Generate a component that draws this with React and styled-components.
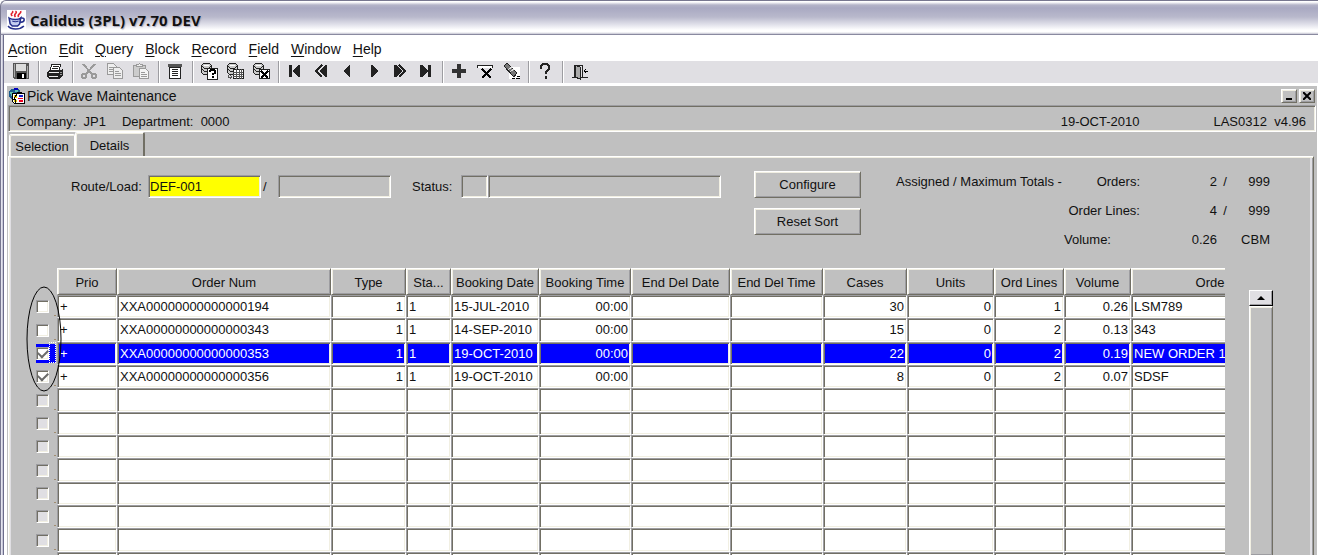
import React from "react";
import styled, { createGlobalStyle, css } from "styled-components";

const c = {
  face: "#c0c0c0",
  tool: "#e0dfe3",
  light: "#f1efe2",
  mid: "#9d9da1",
  dark: "#716f64",
  ink: "#111",
};

const sunken = css`
  border: 1px solid;
  border-color: ${c.mid} #fff #fff ${c.mid};
  box-shadow: inset 1px 1px ${c.dark}, inset -1px -1px ${c.light};
`;
const raised = css`
  border: 1px solid;
  border-color: #fff ${c.dark} ${c.dark} #fff;
  box-shadow: inset 1px 1px ${c.light}, inset -1px -1px ${c.mid};
`;

const GlobalStyle = createGlobalStyle`
  * { box-sizing: border-box; }
  body { margin: 0; background: #fff; }
  body, button, input, table {
    font-family: "Liberation Sans", Arial, sans-serif;
    font-size: 13px;
    line-height: 16px;
    color: ${c.ink};
  }
`;

const Shell = styled.div`
  display: flex;
  flex-direction: column;
  height: 100vh;
  padding-bottom: 2px;
  overflow: hidden;
`;
const TitleBar = styled.header`
  display: flex;
  align-items: center;
  gap: 4px;
  height: 35px;
  flex: none;
  padding: 4px 6px 0;
  border-top: 1px solid #77778f;
  border-left: 1px solid #77778f;
  border-bottom: 1px solid #8a8aa0;
  border-top-left-radius: 6px;
  background: linear-gradient(#fff 0, #fff 1px, #b4b4c8 4px, #a9a9c2 7px, #b9b9cc 16px, #dedee8 23px, #fff 29px, #fff 31px, #c4c4d2 33px);
`;
const AppTitle = styled.h1`
  margin: 0;
  font: bold 15px/20px "Open Sans", "Noto Sans", sans-serif;
  color: ${c.ink};
  text-shadow: 1px 1px 1px #aaaabc;
`;
const Frame = styled.div`
  flex: 1;
  min-height: 0;
  display: flex;
  flex-direction: column;
  border-left: 1px solid #77778f;
  box-shadow: inset 1px 0 #e4e4ee, inset 2px 0 #c8c8d8, inset 3px 0 #6c6c8a;
  padding-left: 3px;
`;
const MenuBar = styled.nav`
  display: flex;
  align-items: center;
  gap: 12px;
  height: 26px;
  flex: none;
  padding: 2px 4px 0;
`;
const MenuButton = styled.button`
  border: 0;
  padding: 0;
  background: none;
  font-size: 14px;
  span { text-decoration: underline; text-underline-offset: 2px; }
`;
const ToolBar = styled.div`
  display: flex;
  height: 22px;
  flex: none;
  padding-left: 5px;
  background: ${c.tool};
`;
const ToolButton = styled.button`
  display: flex;
  justify-content: center;
  width: 26px;
  padding: 2px 0;
  border: 0;
  background: none;
  svg { display: block; }
`;
const Divider = styled.i`
  width: 8px;
  background: linear-gradient(90deg, transparent 3px, ${c.mid} 3px, ${c.mid} 4px, #fff 4px, #fff 5px, transparent 5px);
`;
const Workspace = styled.main`
  flex: 1;
  min-height: 0;
  display: flex;
  flex-direction: column;
  margin: 3px 1px 0 3px;
  background: ${c.face};
`;
const FormTitle = styled.div`
  display: flex;
  align-items: center;
  gap: 2px;
  height: 19px;
  flex: none;
  padding: 0 2px;
`;
const FormName = styled.h2`
  flex: 1;
  margin: 0;
  font-size: 14px;
  font-weight: normal;
`;
const WindowButton = styled.button`
  ${raised}
  display: grid;
  place-items: center;
  width: 16px;
  height: 14px;
  padding: 0;
  background: ${c.face};
  svg { display: block; }
`;
const InfoBar = styled.div`
  ${sunken}
  display: flex;
  height: 27px;
  flex: none;
  margin: 0 1px;
  padding: 8px 9px 0 8px;
  gap: 16px;
`;
const Fact = styled.span`
  white-space: pre;
`;
const DateFact = styled(Fact)`
  margin: 0 58px 0 auto;
`;
const TabStrip = styled.div`
  display: flex;
  align-items: flex-end;
  height: 24px;
  flex: none;
  padding-left: 2px;
`;
const Tab = styled.button`
  width: ${(p) => (p.$active ? 70 : 66)}px;
  height: ${(p) => (p.$active ? 24 : 22)}px;
  padding: 2px 0 0;
  border: 1px solid #fff;
  border-bottom: 0;
  border-radius: 2px 2px 0 0;
  background: ${c.face};
  box-shadow: inset 1px 1px ${c.light};
  ${(p) => p.$active && css`border-right: 2px solid ${c.dark};`}
`;
const TabPanel = styled.section`
  flex: 1;
  min-height: 0;
  display: flex;
  flex-direction: column;
  margin: 0 3px 0 1px;
  border: 1px solid #fff;
  border-right: 1px solid ${c.dark};
  border-bottom: 0;
  box-shadow: inset 1px 1px ${c.light}, inset 2px 0 ${c.tool}, inset -1px 0 ${c.mid}, inset -3px 0 ${c.tool};
  padding: 0 2px;
`;
const FormArea = styled.form`
  display: flex;
  align-items: flex-start;
  height: 111px;
  flex: none;
  padding: 10px 41px 0 60px;
`;
const FieldRow = styled.div`
  display: flex;
  align-items: center;
  padding-top: 8px;
`;
const Label = styled.label`
  width: ${(p) => p.$w}px;
  padding-left: ${(p) => p.$indent || 0}px;
  white-space: nowrap;
`;
const Field = styled.input`
  ${sunken}
  width: ${(p) => p.$w}px;
  height: 23px;
  padding: 0 1px;
  border-radius: 0;
  background: ${(p) => (p.$hot ? "#ff0" : c.face)};
  outline: 0;
`;
const Slash = styled.span`
  width: 17px;
  padding-left: 2px;
`;
const ButtonStack = styled.div`
  display: grid;
  gap: 10px;
  margin-left: 33px;
  padding-top: 4px;
`;
const PushButton = styled.button`
  ${raised}
  width: 107px;
  height: 27px;
  padding: 1px 0 0;
  background: ${c.face};
`;
const Totals = styled.div`
  display: grid;
  grid-template-columns: 168px 76px 77px 16px 37px;
  grid-auto-rows: 29px;
  align-items: center;
  justify-items: end;
  margin-left: auto;
  white-space: nowrap;
`;
const Start = styled.span`
  justify-self: start;
`;
const Caption = styled.span`
  grid-column: 2;
  justify-self: ${(p) => (p.$start ? "start" : "end")};
`;
const Unit = styled.span`
  grid-column: 5;
`;
const Center = styled.span`
  justify-self: center;
`;
const GridArea = styled.div`
  position: relative;
  flex: 1;
  min-height: 0;
  display: flex;
  gap: 24px;
  margin: 0 38px 0 25px;
`;
const Viewport = styled.div`
  flex: 1;
  min-width: 0;
  overflow: hidden;
`;
const Grid = styled.table`
  table-layout: fixed;
  width: 1253px;
  border-collapse: separate;
  border-spacing: 0;
  white-space: nowrap;
`;
const HeadCell = styled.th`
  ${raised}
  height: 27px;
  padding: 2px 0 0;
  font-weight: normal;
  background: ${c.face};
`;
const CornerCell = styled.th`
  padding: 0;
`;
const Row = styled.tr`
  height: 23px;
  &:nth-child(3n + 2) { height: 24px; }
`;
const Cell = styled.td`
  ${sunken}
  padding: 0 2px;
  text-align: ${(p) => (p.$right ? "right" : "left")};
  background: ${(p) => (p.$on ? "#00f" : "#fff")};
  color: ${(p) => (p.$on ? "#fff" : c.ink)};
`;
const TickCell = styled.td`
  padding: 0;
`;
const TickBox = styled.div`
  display: flex;
  align-items: center;
  justify-content: space-between;
  width: 20px;
  height: 19px;
  background: ${(p) => (p.$on ? "#00f" : "transparent")};
  &::after {
    content: "";
    width: ${(p) => (p.$on ? 5 : 2)}px;
    height: ${(p) => (p.$on ? 19 : 1)}px;
    align-self: flex-end;
    border: ${(p) => (p.$on ? "1px dotted #fff" : "0")};
    background: ${(p) => (p.$on ? "transparent" : "#a08c70")};
  }
`;
const Tick = styled.input`
  ${sunken}
  appearance: none;
  display: grid;
  place-items: center;
  width: 13px;
  height: 13px;
  margin: 0;
  background: #fff;
  &:disabled { background: ${c.tool}; }
  &:checked::after {
    content: "";
    width: 8px;
    height: 5px;
    margin-bottom: 2px;
    border: solid #6a6a6a;
    border-width: 0 0 2px 2px;
    transform: rotate(-45deg);
  }
`;
const ScrollBar = styled.div`
  display: flex;
  flex-direction: column;
  width: 24px;
  margin-top: 22px;
`;
const ScrollUp = styled.button`
  display: grid;
  place-items: center;
  height: 16px;
  padding: 0;
  border: 1px solid;
  border-color: #fff #000 #000 #fff;
  box-shadow: inset -1px -1px ${c.mid};
  background: ${c.tool};
`;
const ScrollTrack = styled.div`
  ${raised}
  flex: 1;
  border-bottom: 0;
`;
const Ring = styled.svg`
  position: absolute;
  left: -10px;
  top: 18px;
`;

const K = "#222";
const G = "#9a9a9a";
const art = {
  save: (
    <>
      <path d="M0 0h16v16H1L0 15z" fill="#555" />
      <path d="M3 1h10v7H3z" fill="#ddd" />
      <path d="M4 10h9v6H4z" fill="#000" />
      <path d="M9 11h2v4H9z" fill="#fff" />
      <path d="M1 1h1v13H1zM14 3h1v12h-1z" fill="#aaa" />
    </>
  ),
  print: (
    <>
      <path d="M5 1h9l-2 6H3z" fill="#fff" stroke={K} />
      <path d="M6 3h6M5 5h6" stroke={K} />
      <path d="M2 7h12l2-2v7l-3 4H2l-2-2V9z" fill={K} />
      <path d="M2 9h10M2 13h9" stroke="#eee" />
      <path d="M13 9h2M13 11h2" stroke="#999" />
    </>
  ),
  cut: (
    <g fill="none" stroke={G} strokeWidth="2">
      <path d="M2 1l9 10M14 1L5 11" />
      <circle cx="3" cy="13" r="2" />
      <circle cx="13" cy="13" r="2" />
    </g>
  ),
  copy: (
    <g fill="#eee" stroke={G}>
      <path d="M.5.5h6l3 3v8h-9z" />
      <path d="M2 4h4M2 6h4M2 8h4" />
      <path d="M6.500 4.500h6l3 3v8h-9z" />
      <path d="M8 8h4M8 10h6M8 12h6" />
    </g>
  ),
  paste: (
    <g fill="#ccc" stroke={G}>
      <path d="M.5 2.500h12v11H.5z" />
      <path d="M3.500 3.500v-2h2l1-1 1 1h2v2z" fill="#eee" />
      <path d="M6.500 5.500h6l3 3v7h-9z" fill="#f4f4f4" />
      <path d="M8 9h4M8 11h6M8 13h6" />
    </g>
  ),
  list: (
    <>
      <path d="M1 1h14v3H1z" fill="#555" />
      <path d="M2.500 4.500h11v11h-11z" fill="#fff" stroke={K} />
      <path d="M5 6.500h6M5 8.500h6M5 10.500h6M5 12.500h6" stroke={K} />
    </>
  ),
  query: (
    <>
      <Drum />
      <path d="M6.500 5.500h10v11h-10z" fill="#fff" stroke={K} />
      <path d="M9 9V8l1-1h3l1 1v2l-2 1v1M12 13v2" fill="none" stroke="#000" strokeWidth="1.500" />
    </>
  ),
  sheet: (
    <>
      <Drum />
      <path d="M6.500 6.500h10v9h-10z" fill="#fff" stroke={K} />
      <path d="M6 9h10M6 11h10M6 13h10M9 6v10M12 6v10M14 6v10M1 12v2h4M3 12l2 2-2 2" fill="none" stroke="#555" />
    </>
  ),
  cancel: (
    <>
      <Drum />
      <path d="M6.500 6.500h10v9h-10z" fill="#fff" stroke={K} />
      <path d="M8 8l7 7M15 8l-7 7" stroke="#000" strokeWidth="2" />
    </>
  ),
  first: <path d="M2 2h3v12H2zM13 2v12h-2L5 8l6-6z" fill={K} />,
  prior: (
    <>
      <path d="M14 2v12h-2L6 8l6-6z" fill={K} />
      <path d="M9 2L3 8l6 6" fill="none" stroke={K} strokeWidth="2" />
    </>
  ),
  left: <path d="M11 2v12h-1L4 8l6-6z" fill={K} />,
  right: <path d="M6 2v12h1l6-6-6-6z" fill={K} />,
  next: (
    <>
      <path d="M3 2v12h2l6-6-6-6z" fill={K} />
      <path d="M8 2l6 6-6 6" fill="none" stroke={K} strokeWidth="2" />
    </>
  ),
  last: <path d="M11 2h3v12h-3zM3 2v12h2l6-6-6-6z" fill={K} />,
  add: <path d="M6 1h4v5h5v4h-5v5H6v-5H1V6h5z" fill="#333" />,
  remove: (
    <>
      <path d="M.5 5V2.500h15V5" fill="#fff" stroke={K} />
      <path d="M5 6l9 9M14 6l-9 9" stroke="#000" strokeWidth="2.500" />
    </>
  ),
  clear: (
    <>
      <path d="M6 4h11v12H6z" fill="#fff" />
      <path d="M1 3l3-3 10 10-3 4z" fill="#777" stroke={K} />
      <path d="M5 7l4-3M7 9l4-3" stroke="#ddd" />
      <path d="M9 15h3M14 13h3M13 15h4" stroke="#000" />
    </>
  ),
  help: (
    <path d="M4 6V3l2-2h4l2 2v3L9 9v2M9 13v3" fill="none" stroke={K} strokeWidth="2.500" />
  ),
  exit: (
    <>
      <path d="M3.500 14V2.500h8V14M1 14.500h3M10 14.500h7" fill="none" stroke={K} />
      <path d="M4 2l5 2v12l-5-2z" fill="#aaa" stroke={K} />
      <path d="M17 8h-4M15 6l-2 2 2 2" fill="none" stroke="#000" />
    </>
  ),
};

function Drum() {
  return (
    <>
      <path d="M.5 2.500l2-2h6l2 2v7l-2 2h-6l-2-2z" fill="#ccc" stroke={K} />
      <path d="M1 3l2 2h5l2-2M1 6l2 2h5" fill="none" stroke={K} />
      <path d="M3 2h5" stroke="#fff" />
    </>
  );
}

function Icon({ name }) {
  return (
    <svg width="18" height="18" viewBox="0 0 18 18" shapeRendering="crispEdges">
      {art[name]}
    </svg>
  );
}

const JavaIcon = () => (
  <svg width="19" height="20" viewBox="0 0 18 20" preserveAspectRatio="none">
    <path d="M0 0h18v20H0z" fill="#fff" />
    <path d="M5 6C2 3 7 3 5 1M8 7C5 4 11 3 8 1M11 7c-2-3 3-3 2-6" fill="none" stroke="#e0202c" strokeWidth="1.500" />
    <path d="M2 8c3 2 9 2 11 0l-1 6-2 2H5l-2-2z" fill="#c4cdf0" stroke="#26308c" strokeWidth="1.500" />
    <path d="M13 8c5-1 4 5-1 4M1 16c3 4 11 4 15 0" fill="none" stroke="#26308c" strokeWidth="1.500" />
    <path d="M5 11c2 1 4 1 6 0" fill="none" stroke="#26308c" />
  </svg>
);

const FormIcon = () => (
  <svg width="16" height="16" viewBox="0 0 16 16" shapeRendering="crispEdges">
    <path d="M2 1h8l2 4-2 6H2L0 8V3z" fill="#1a5a8c" />
    <path d="M1 4h3v4H2zM6 2h3v2H6z" fill="#5fc0b0" />
    <path d="M5 0h4v2H5z" fill="#00b" />
    <path d="M3.500 5.500h12v10h-10l-2-2z" fill="#fff" stroke="#000" />
    <path d="M8 4h5v2H8z" fill="#000" />
    <path d="M5 7h3v3H5zM5 12h3v2H5z" fill="#f4d400" />
    <path d="M8 6L5 11h2l-1 4" fill="none" stroke="#000" />
    <path d="M10 7h4v2h-4z" fill="#12c" />
    <path d="M9 10h5v1H9zM10 12h4v2h-4z" fill="#e02" />
  </svg>
);

const menus = ["Action", "Edit", "Query", "Block", "Record", "Field", "Window", "Help"];
const tools = [
  ["save"],
  ["print"],
  ["cut", "copy", "paste"],
  ["list"],
  ["query", "sheet", "cancel"],
  ["first", "prior", "left", "right", "next", "last"],
  ["add", "remove", "clear"],
  ["help"],
  ["exit"],
];

const columns = [
  { title: "Prio", w: 60 },
  { title: "Order Num", w: 214 },
  { title: "Type", w: 75, right: true },
  { title: "Sta...", w: 45 },
  { title: "Booking Date", w: 88 },
  { title: "Booking Time", w: 92, right: true },
  { title: "End Del Date", w: 99 },
  { title: "End Del Time", w: 93 },
  { title: "Cases", w: 84, right: true },
  { title: "Units", w: 87, right: true },
  { title: "Ord Lines", w: 70, right: true },
  { title: "Volume", w: 67, right: true },
  { title: "Orde", w: 158 },
];

const orders = [
  { cells: ["+", "XXA00000000000000194", "1", "1", "15-JUL-2010", "00:00", "", "", "30", "0", "1", "0.26", "LSM789"] },
  { cells: ["+", "XXA00000000000000343", "1", "1", "14-SEP-2010", "00:00", "", "", "15", "0", "2", "0.13", "343"] },
  { picked: true, current: true, cells: ["+", "XXA00000000000000353", "1", "1", "19-OCT-2010", "00:00", "", "", "22", "0", "2", "0.19", "NEW ORDER 1"] },
  { picked: true, cells: ["+", "XXA00000000000000356", "1", "1", "19-OCT-2010", "00:00", "", "", "8", "0", "2", "0.07", "SDSF"] },
];
const rows = Array.from({ length: 12 }, (_, i) => orders[i] || { empty: true, cells: [] });

function OrderGrid() {
  return (
    <Grid>
      <colgroup>
        <col width="21" />
        {columns.map((col) => (
          <col key={col.title} width={col.w} />
        ))}
      </colgroup>
      <thead>
        <tr>
          <CornerCell />
          {columns.map((col) => (
            <HeadCell key={col.title} scope="col">{col.title}</HeadCell>
          ))}
        </tr>
      </thead>
      <tbody>
        {rows.map((row, i) => (
          <Row key={i}>
            <TickCell>
              <TickBox $on={row.current}>
                <Tick
                  type="checkbox"
                  aria-label={`Pick row ${i + 1}`}
                  defaultChecked={row.picked}
                  disabled={row.empty}
                />
              </TickBox>
            </TickCell>
            {columns.map((col, n) => (
              <Cell key={col.title} $right={col.right} $on={row.current}>
                {row.cells[n]}
              </Cell>
            ))}
          </Row>
        ))}
      </tbody>
    </Grid>
  );
}

export default function App() {
  return (
    <Shell>
      <GlobalStyle />
      <TitleBar>
        <JavaIcon />
        <AppTitle>Calidus (3PL) v7.70 DEV</AppTitle>
      </TitleBar>
      <Frame>
        <MenuBar>
          {menus.map((m) => (
            <MenuButton key={m}><span>{m[0]}</span>{m.slice(1)}</MenuButton>
          ))}
        </MenuBar>
        <ToolBar>
          {tools.map((group, i) => (
            <React.Fragment key={group[0]}>
              {i > 0 && <Divider />}
              {group.map((name) => (
                <ToolButton key={name} aria-label={name}><Icon name={name} /></ToolButton>
              ))}
            </React.Fragment>
          ))}
        </ToolBar>
        <Workspace>
          <FormTitle>
            <FormIcon />
            <FormName>Pick Wave Maintenance</FormName>
            <WindowButton aria-label="Minimize">
              <svg width="8" height="8"><path d="M1 6h6v2H1z" /></svg>
            </WindowButton>
            <WindowButton aria-label="Close">
              <svg width="8" height="8"><path d="M0 0l8 8M8 0L0 8" stroke="#000" strokeWidth="2" /></svg>
            </WindowButton>
          </FormTitle>
          <InfoBar>
            <Fact>{"Company:  JP1"}</Fact>
            <Fact>{"Department:  0000"}</Fact>
            <DateFact>19-OCT-2010</DateFact>
            <Fact>{"LAS0312  v4.96"}</Fact>
          </InfoBar>
          <TabStrip role="tablist">
            <Tab role="tab">Selection</Tab>
            <Tab role="tab" aria-selected="true" $active>Details</Tab>
          </TabStrip>
          <TabPanel>
            <FormArea onSubmit={(e) => e.preventDefault()}>
              <FieldRow>
                <Label htmlFor="route" $w={77}>Route/Load:</Label>
                <Field id="route" $w={113} $hot defaultValue="DEF-001" />
                <Slash>/</Slash>
                <Field aria-label="Load" $w={113} />
              </FieldRow>
              <FieldRow>
                <Label htmlFor="status" $w={70} $indent={21}>Status:</Label>
                <Field id="status" $w={27} />
                <Field aria-label="Status description" $w={233} />
              </FieldRow>
              <ButtonStack>
                <PushButton type="button">Configure</PushButton>
                <PushButton type="button">Reset Sort</PushButton>
              </ButtonStack>
              <Totals>
                <Start>Assigned / Maximum Totals -</Start>
                <Caption>Orders:</Caption>
                <span>2</span>
                <Center>/</Center>
                <Unit>999</Unit>
                <Caption>Order Lines:</Caption>
                <span>4</span>
                <Center>/</Center>
                <Unit>999</Unit>
                <Caption $start>Volume:</Caption>
                <span>0.26</span>
                <Unit>CBM</Unit>
              </Totals>
            </FormArea>
            <GridArea>
              <Viewport>
                <OrderGrid />
              </Viewport>
              <ScrollBar>
                <ScrollUp aria-label="Scroll up">
                  <svg width="8" height="4"><path d="M0 4l4-4 4 4z" /></svg>
                </ScrollUp>
                <ScrollTrack />
              </ScrollBar>
              <Ring width="36" height="106" aria-hidden="true">
                <ellipse cx="18" cy="53" rx="17" ry="52" fill="none" stroke="#000" />
              </Ring>
            </GridArea>
          </TabPanel>
        </Workspace>
      </Frame>
    </Shell>
  );
}
